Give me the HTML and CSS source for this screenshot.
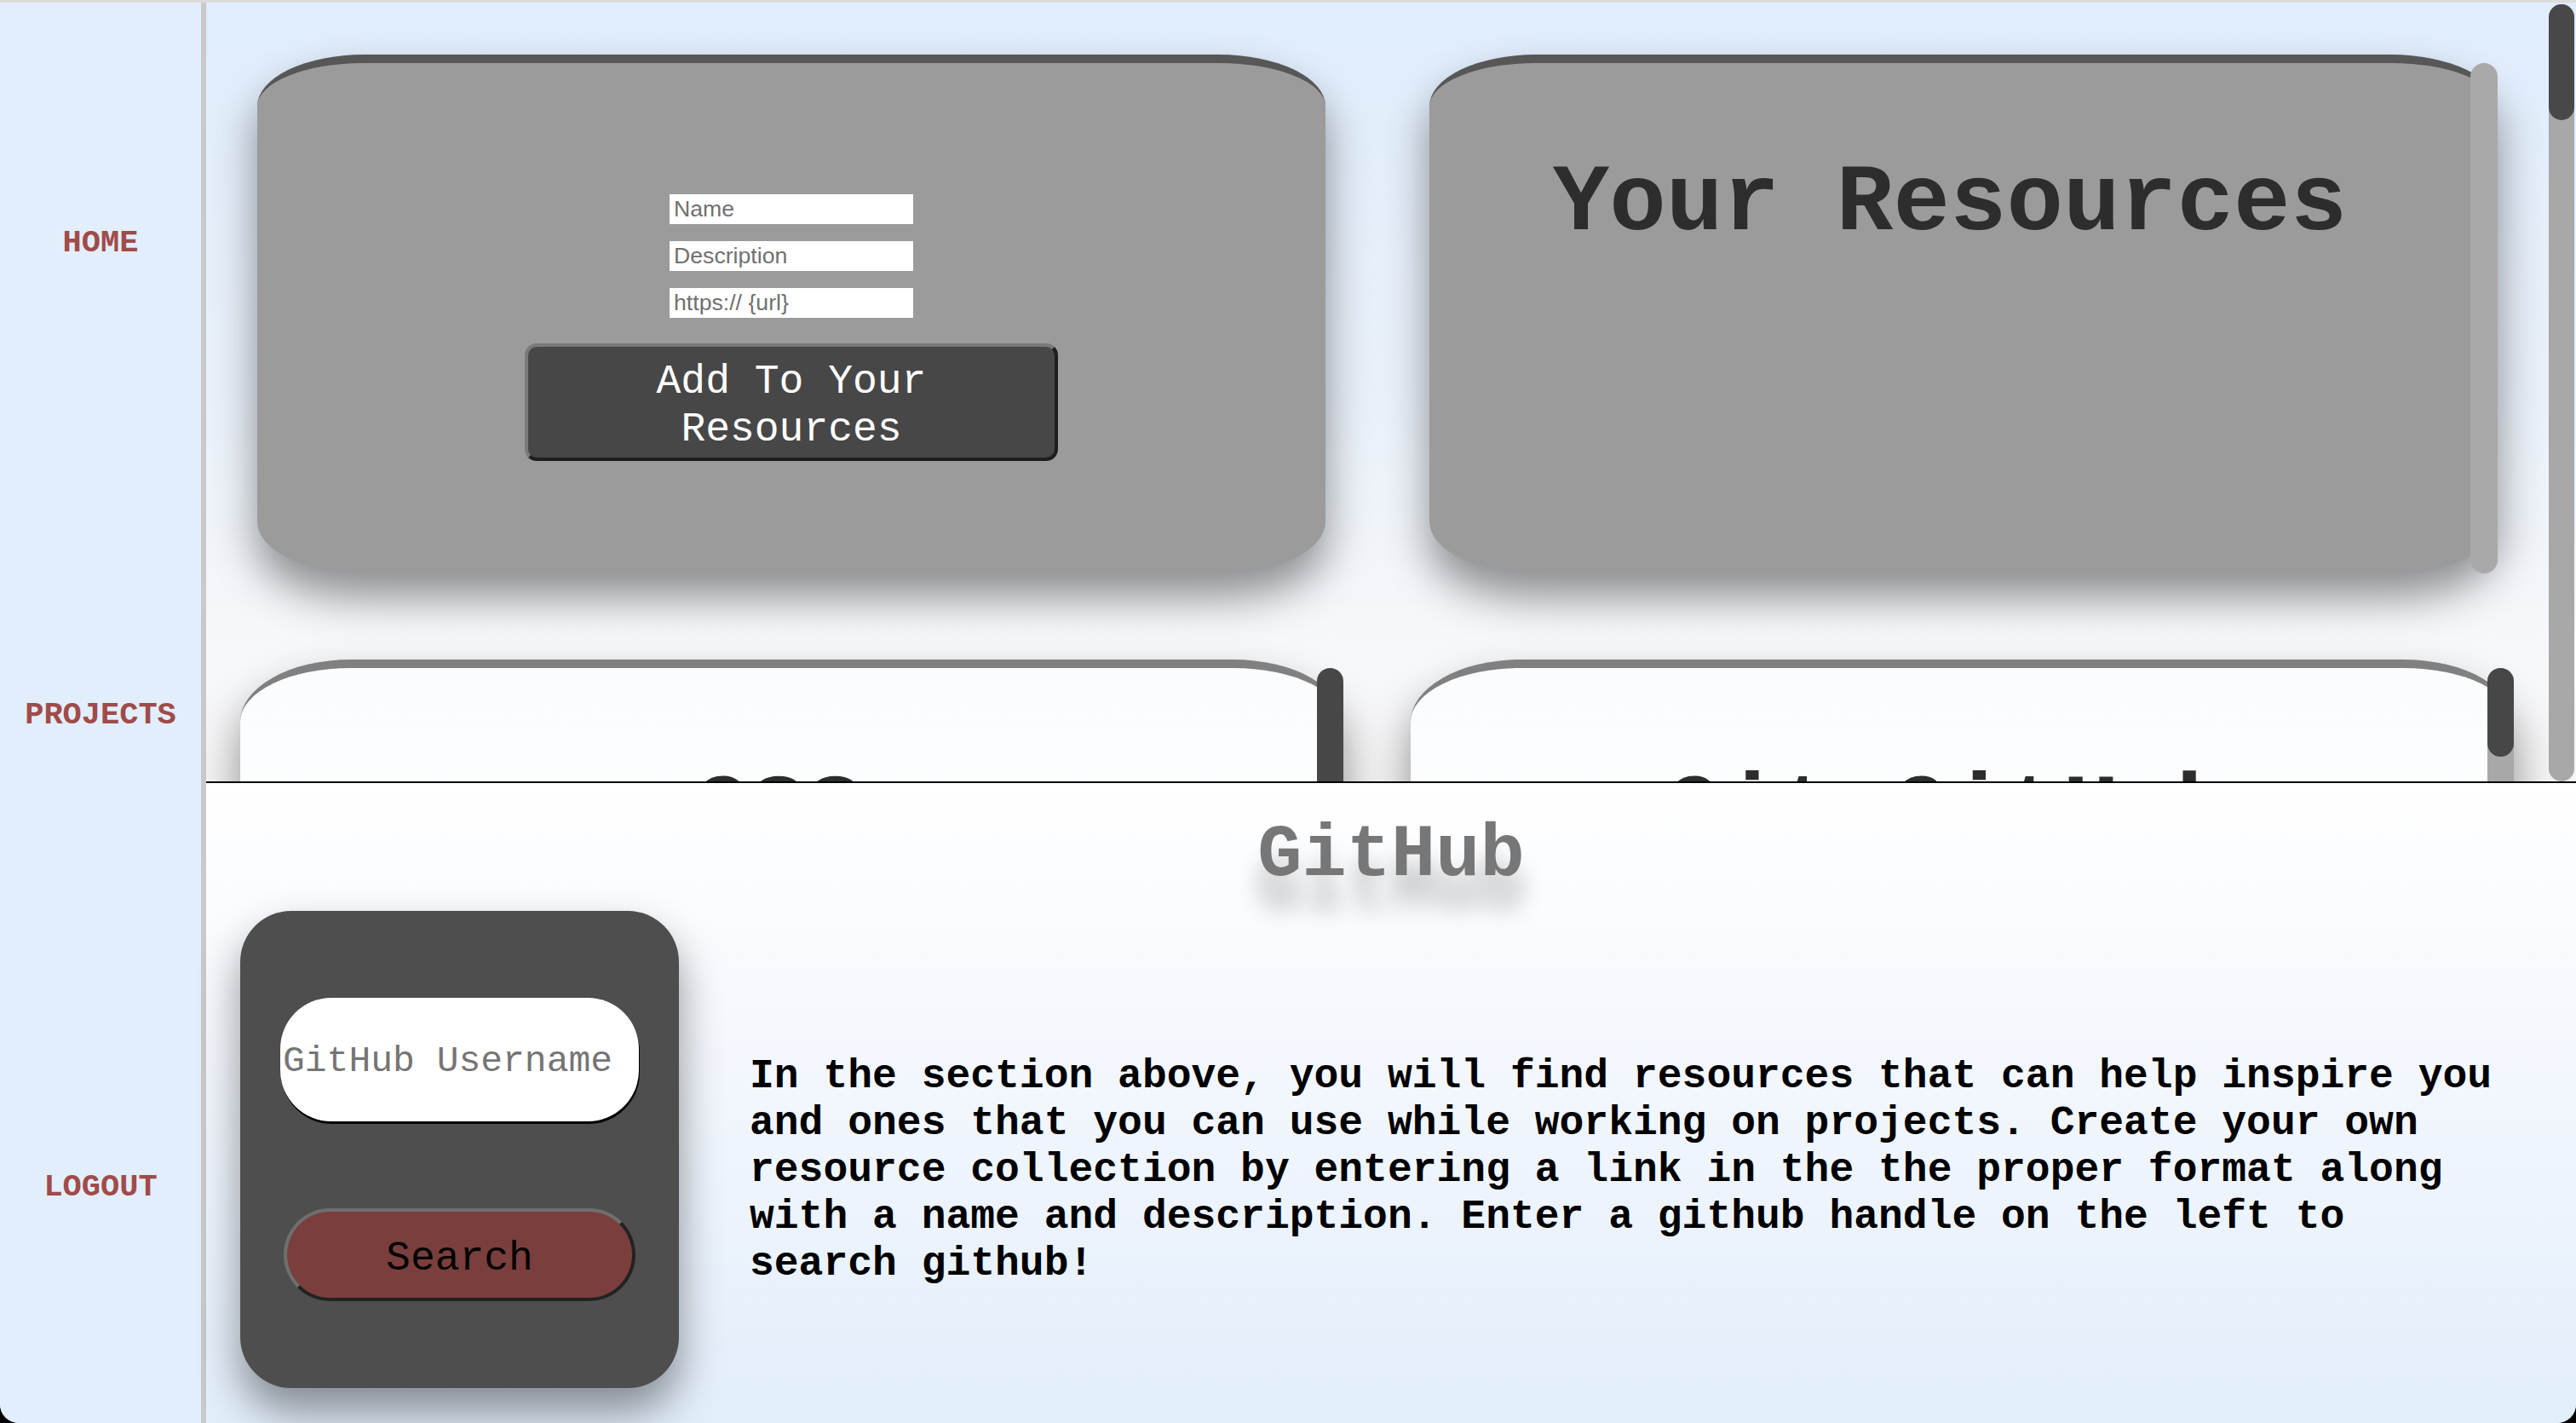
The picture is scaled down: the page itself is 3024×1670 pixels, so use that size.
FILE: index.html
```html
<!DOCTYPE html>
<html lang="en">
<head>
<meta charset="utf-8">
<title>Resources</title>
<link rel="stylesheet" href="styles.css">
</head>
<body>
<div class="app">
  <nav class="sidebar">
    <a class="nav-link" href="#">HOME</a>
    <a class="nav-link" href="#">PROJECTS</a>
    <a class="nav-link" href="#">LOGOUT</a>
  </nav>
  <main class="main">
    <section class="resources">
      <div class="resources-content">
        <div class="row row-top">
          <div class="card card-gray card-form">
            <form class="resource-form">
              <input class="text-input" type="text" placeholder="Name">
              <input class="text-input" type="text" placeholder="Description">
              <input class="text-input" type="text" placeholder="https:// {url}">
              <button class="add-btn" type="button">Add To Your Resources</button>
            </form>
          </div>
          <div class="card card-gray card-list">
            <h2 class="card-title">Your Resources</h2>
            <div class="card-scrollbar light"></div>
          </div>
        </div>
        <div class="row row-projects">
          <div class="card card-white">
            <h2 class="card-title project-title">CSS</h2>
            <div class="card-scrollbar dark"></div>
          </div>
          <div class="card card-white">
            <h2 class="card-title project-title">Git GitHub</h2>
            <div class="card-scrollbar split"><div class="scroll-thumb"></div></div>
          </div>
        </div>
      </div>
      <div class="page-scrollbar"><div class="page-thumb"></div></div>
    </section>
    <section class="github">
      <h2 class="github-title">GitHub</h2>
      <div class="github-row">
        <div class="search-card">
          <input class="user-input" type="text" placeholder="GitHub Username">
          <button class="search-btn" type="button">Search</button>
        </div>
        <p class="github-text">In the section above, you will find resources that can help inspire you and ones that you can use while working on projects. Create your own resource collection by entering a link in the the proper format along with a name and description. Enter a github handle on the left to search github!</p>
      </div>
    </section>
  </main>
</div>
</body>
</html>
```
FILE: styles.css
```css
* { box-sizing: border-box; }

html {
  background: #000;
}

body {
  margin: 0;
  height: 100vh;
  border-top: 3px solid #dcdcdc;
  border-radius: 0 0 22px 22px;
  overflow: hidden;
  font-family: "Liberation Mono", "Courier New", monospace;
  background: #e2eefc;
}

.app {
  display: flex;
  height: 100%;
}

/* Sidebar */
.sidebar {
  width: 242px;
  flex: none;
  background: #e2eefc;
  border-right: 6px solid #c9c9c9;
  display: flex;
  flex-direction: column;
  justify-content: space-around;
  align-items: center;
  padding-top: 5px;
}

.nav-link {
  font-size: 37px;
  font-weight: bold;
  color: #a04b49;
  text-decoration: none;
}

/* Main */
.main {
  flex: 1;
  display: flex;
  flex-direction: column;
  min-width: 0;
}

.resources {
  position: relative;
  height: 914px;
  flex: none;
  overflow: hidden;
  background: linear-gradient(to bottom, #e0edfc 0%, #e9f0f9 50%, #f7f8fa 85%, #f4f4f5 100%);
}

.resources-content {
  padding: 61px 32px 0 0;
}

.row {
  display: grid;
  grid-template-columns: 1fr 1fr;
}

.row-top {
  padding: 0 60px;
  column-gap: 122px;
}

.row-projects {
  margin-top: 101px;
  padding: 0 41px 0 40px;
  column-gap: 79px;
}

.card {
  position: relative;
  border-radius: 10%;
  box-shadow: 0 28px 50px rgba(0, 0, 0, 0.42);
}

.card-gray {
  height: 609px;
  background: #9b9b9b;
  border-top: 10px solid #575757;
}

.card-white {
  height: 730px;
  background: linear-gradient(to bottom, #fbfcfd, #ffffff);
  border-top: 10px solid #808080;
}

.card-form {
  display: flex;
  justify-content: center;
  align-items: center;
  padding-top: 22px;
}

.resource-form {
  display: flex;
  flex-direction: column;
  align-items: center;
}

.text-input {
  width: 286px;
  height: 35px;
  border: none;
  padding: 2px 5px;
  margin: 0 0 20px;
  font-family: "Liberation Sans", Arial, sans-serif;
  font-size: 26.67px;
  background: #fff;
  outline: none;
}

.text-input::placeholder {
  color: #707070;
}

.add-btn {
  margin-top: 10px;
  width: 626px;
  height: 138px;
  padding: 13px 12px 5px;
  background: #474747;
  color: #fff;
  font-family: "Liberation Mono", "Courier New", monospace;
  font-size: 48px;
  line-height: 56px;
  border: 4px solid;
  border-color: #7a7a7a #1e1e1e #1e1e1e #7a7a7a;
  border-radius: 14px;
}

.card-list {
  padding-right: 32px;
}

.card-title {
  margin: 103px 0 0;
  font-size: 111px;
  font-weight: bold;
  color: #2d2d2d;
  text-align: center;
}

.card-white {
  padding-right: 31px;
}

.project-title {
  margin-top: 109px;
}

.card-scrollbar {
  position: absolute;
  top: 0;
  right: 0;
  bottom: 0;
  width: 32px;
  border-radius: 16px;
}

.card-scrollbar.light {
  background: #a9a9a9;
}

.card-scrollbar.dark {
  width: 31px;
  background: #474747;
}

.card-scrollbar.split {
  width: 31px;
  background: #a8a8a8;
}

.scroll-thumb {
  height: 104px;
  border-radius: 16px;
  background: #474747;
}

.page-scrollbar {
  position: absolute;
  top: 2px;
  right: 2px;
  bottom: 0;
  width: 30px;
  border-radius: 15px;
  background: #a8a8a8;
}

.page-thumb {
  height: 136px;
  border-radius: 15px;
  background: #484848;
}

/* GitHub section */
.github {
  flex: 1;
  border-top: 2px solid #000;
  background: linear-gradient(to bottom, #ffffff 0%, #f3f7fd 45%, #e2eefb 100%);
  display: flex;
  flex-direction: column;
}

.github-title {
  margin: 36px 0 16px;
  text-align: center;
  font-size: 87px;
  font-weight: bold;
  color: #777;
  text-shadow: 0 38px 26px rgba(0, 0, 0, 0.26);
}

.github-row {
  display: flex;
  align-items: center;
  padding-left: 40px;
}

.search-card {
  width: 515px;
  height: 560px;
  flex: none;
  background: #4e4e4e;
  border-radius: 60px;
  box-shadow: 0 28px 50px rgba(0, 0, 0, 0.42);
  display: flex;
  flex-direction: column;
  justify-content: space-evenly;
  align-items: center;
}

.user-input {
  width: 421px;
  height: 145px;
  border: none;
  border-radius: 60px;
  padding: 4px 3px 0;
  background: #fff;
  box-shadow: 1px 3px 0 #000;
  font-family: "Liberation Mono", "Courier New", monospace;
  font-size: 43px;
  outline: none;
}

.user-input::placeholder {
  color: #757575;
}

.search-btn {
  width: 413px;
  height: 109px;
  padding: 8px 0 0;
  background: #7a3f3d;
  border: 4px solid;
  border-color: #6f6f6f #222 #222 #6f6f6f;
  border-radius: 55px;
  font-family: "Liberation Mono", "Courier New", monospace;
  font-size: 48px;
  color: #000;
}

.github-text {
  flex: 1;
  margin: 48px 84px 0 83px;
  font-size: 48px;
  line-height: 55px;
  font-weight: bold;
  color: #000;
}
```
